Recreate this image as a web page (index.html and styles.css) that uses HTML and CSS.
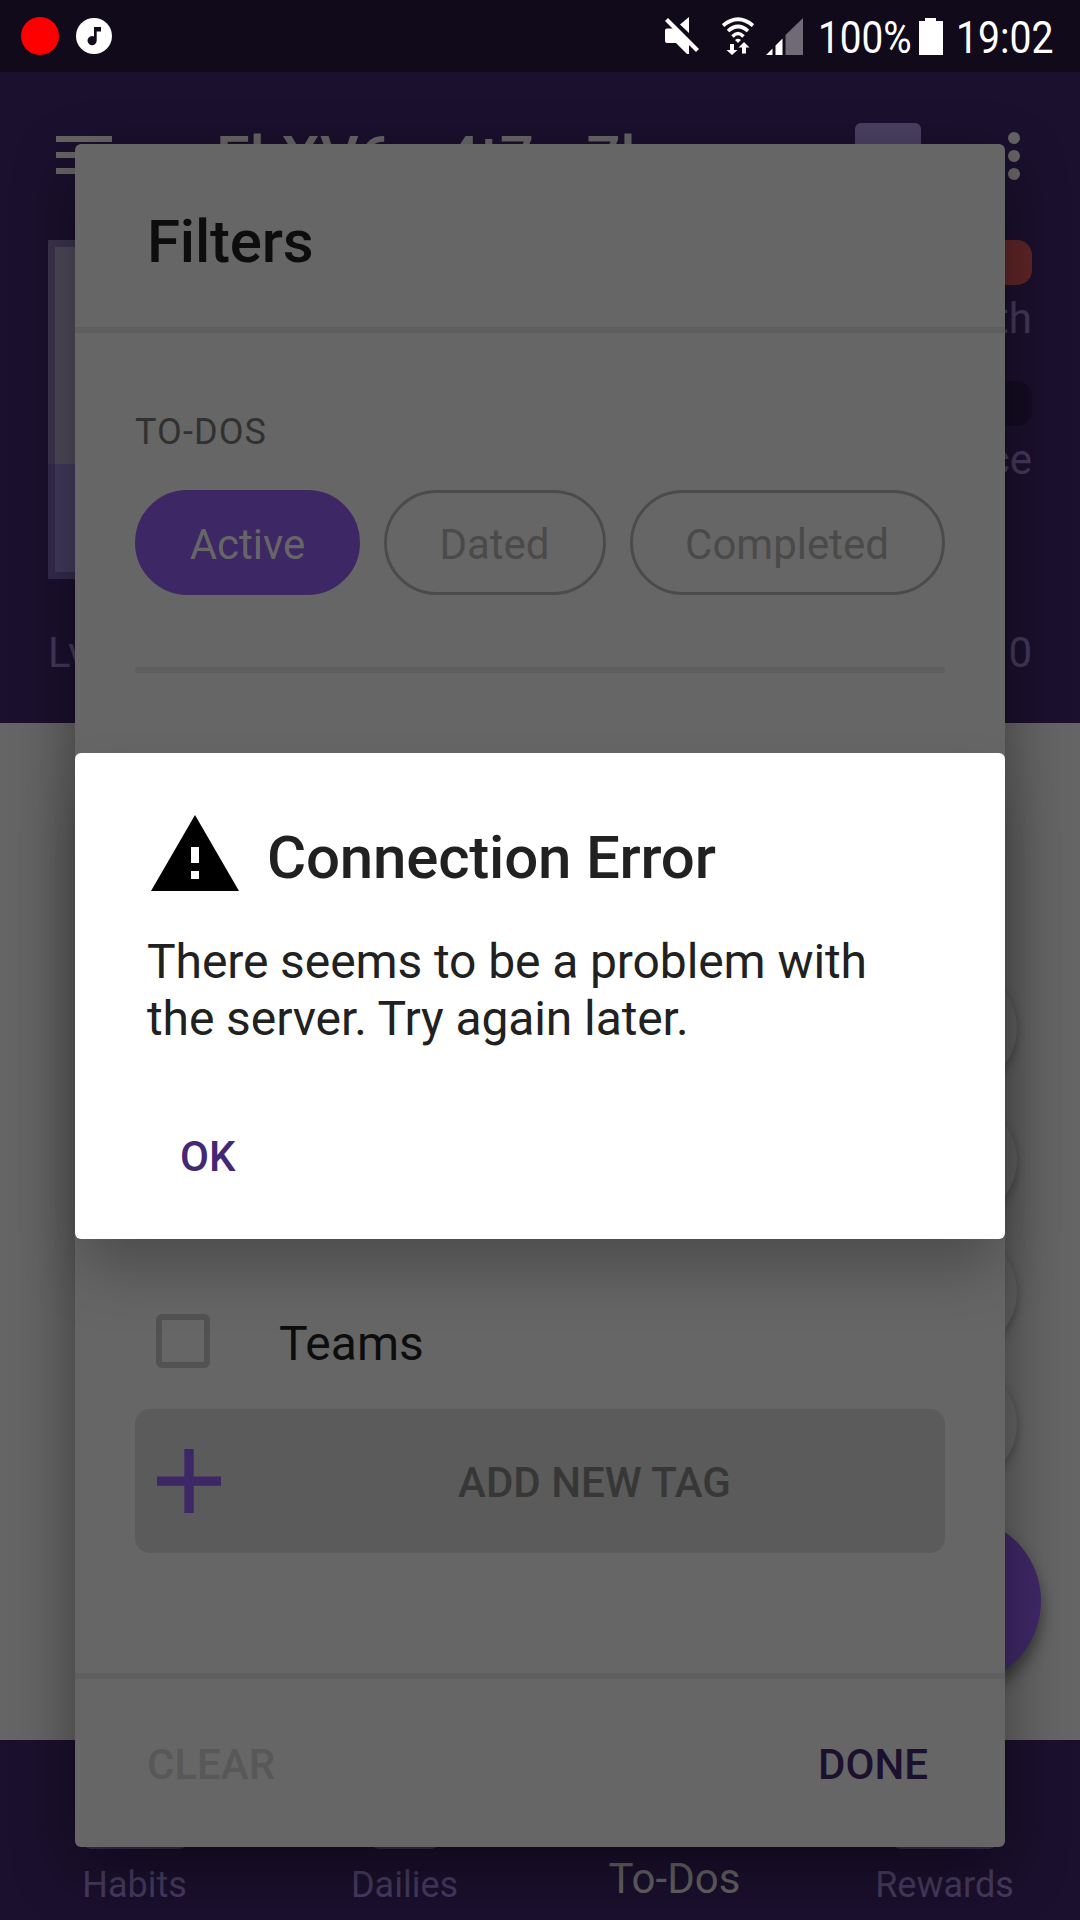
FILE: index.html
```
<!DOCTYPE html>
<html lang="en">
<head>
<meta charset="utf-8">
<title>Filters</title>
<link rel="stylesheet" href="styles.css">
</head>
<body>
<div class="screen">
  <div class="statusbar">
    <span class="rec"></span>
    <svg class="music" viewBox="0 0 36 36"><circle cx="18" cy="18" r="18" fill="#fff"/><path d="M18 9h7v4.500h-4.300v9a4.600 4.600 0 1 1-2.700-4.100z" fill="#120b1c"/></svg>
    <span class="spacer"></span>
    <svg class="mute" viewBox="0 0 34 38" fill="#fff"><path d="M24 0v16L15 7.500zM2 11.500h9L24 24v13h-2L11 26H2Q0 26 0 24V13.500q0-2 2-2z"/><path d="M1.500 2.500l31 31" stroke="#fff" stroke-width="4.200"/></svg>
    <svg class="wifi" viewBox="0 0 32 38" fill="none" stroke="#fff"><path d="M1 8.500Q16-4 31 8.500" stroke-width="3.700"/><path d="M6 14Q16 5 26 14" stroke-width="3.600"/><path d="M10.500 19.500Q16 13.500 21.500 19.500" stroke-width="3.400"/><path d="M13 23Q16 20.500 19 23L16 26z" fill="#fff" stroke="none"/><path d="M8 27h4v6h3.500L10 38l-5.500-5H8zM20 36.500h4v-6h3.500L22 25l-5.500 5.500H20z" fill="#fff" stroke="none"/></svg>
    <svg class="signal" viewBox="0 0 37 37"><path d="M0 37l6.500-6.500V37zM9.500 37V27.500l7-7V37z" fill="#fff"/><path d="M19.500 37V17L37 0v37z" fill="#6f6a76"/></svg>
    <span class="pct">100%</span>
    <svg class="battery" viewBox="0 0 24 37"><path d="M6 0h11v3h7v34H0V3h6z" fill="#fff"/></svg>
    <span class="clock">19:02</span>
  </div>

  <div class="header">
    <div class="toolbar">
      <span class="burger"><i></i><i></i><i></i></span>
      <span class="username">EkXV6m4t7m7k</span>
      <span class="tool-icon"></span>
      <span class="dots"><i></i><i></i><i></i></span>
    </div>
    <div class="profile">
      <div class="avatar"></div>
      <div class="stats">
        <div class="bar health"></div>
        <div class="label">Health</div>
        <div class="bar exp"></div>
        <div class="label">Experience</div>
      </div>
    </div>
    <div class="level"><span>Lvl 1</span><span>0</span></div>
  </div>

  <div class="tasks">
    <div class="fabs">
      <span class="mini"></span><span class="mini"></span><span class="mini"></span><span class="mini"></span>
      <span class="fab"></span>
    </div>
  </div>

  <div class="nav">
    <div class="tab"><span class="tab-icon wide"></span><span class="tab-label">Habits</span></div>
    <div class="tab"><span class="tab-icon"></span><span class="tab-label">Dailies</span></div>
    <div class="tab active"><span class="tab-label">To-Dos</span></div>
    <div class="tab"><span class="tab-icon wide"></span><span class="tab-label">Rewards</span></div>
  </div>

  <div class="dialog filters">
    <h1 class="filters-title">Filters</h1>
    <div class="filters-body">
      <div class="section">TO-DOS</div>
      <div class="chips">
        <span class="chip on">Active</span><span class="chip dated">Dated</span><span class="chip done-chip">Completed</span>
      </div>
      <div class="rule"></div>
      <div class="tags-head">EDIT</div>
      <div class="tag-row"><span class="check"></span><span class="tag-name">Teams</span></div>
      <div class="add"><svg class="plus" viewBox="0 0 64 64"><path d="M27.300 0h9.400v27.500H64v9.300H36.700V64h-9.400V36.800H0v-9.300h27.300z" fill="#3e2766"/></svg><span>ADD NEW TAG</span></div>
    </div>
    <div class="actions"><span class="clear">CLEAR</span><span class="done">DONE</span></div>
  </div>

  <div class="dialog error">
    <div class="error-head">
      <svg class="warn" viewBox="0 0 24 24"><path d="M1 21h22L12 2 1 21zm12-3h-2v-2h2v2zm0-4h-2v-4h2v4z"/></svg>
      <h2>Connection Error</h2>
    </div>
    <p>There seems to be a problem with<br>the server. Try again later.</p>
    <span class="ok">OK</span>
  </div>
</div>
</body>
</html>
```
FILE: styles.css
```
* { box-sizing: border-box; }
body { margin: 0; font-family: Roboto, "Noto Sans", sans-serif; }
h1, h2, p { margin: 0; }
.screen { position: relative; width: 1080px; height: 1920px; overflow: hidden; display: flex; flex-direction: column; background: #656565; }

.statusbar { height: 72px; flex: none; background: #110a1b; display: flex; align-items: center; padding: 0 25px 0 21px; color: #fff; font-size: 45px; position: relative; z-index: 1; }
.rec { width: 38px; height: 38px; border-radius: 50%; background: #f00; }
.music { width: 36px; height: 36px; margin-left: 17px; }
.spacer { flex: 1; }
.mute { width: 34px; height: 38px; margin-right: 23px; }
.wifi { width: 32px; height: 38px; margin-right: 12px; }
.signal { width: 37px; height: 37px; margin-right: 15px; }
.pct, .clock { white-space: nowrap; line-height: 72px; padding-top: 3px; transform-origin: 0 50%; transform: scaleX(.86); }
.pct { width: 93px; }
.battery { width: 24px; height: 37px; margin-right: 13px; margin-left: 8px; }
.clock { width: 99px; transform: scaleX(.87); }

.header { height: 651px; flex: none; background: #1b102e; display: flex; flex-direction: column; color: #43395c; font-size: 42px; }
.toolbar { height: 168px; display: flex; align-items: flex-start; padding: 51px 60px 0 56px; }
.burger { width: 56px; display: flex; flex-direction: column; gap: 10px; padding-top: 13px; }
.burger i { height: 6px; background: #656565; }
.username { width: 639px; margin-left: 104px; font-size: 60px; font-weight: 500; line-height: 70px; color: #656565; letter-spacing: .15px; }
.tool-icon { width: 66px; height: 66px; border-radius: 6px; background: #4a4062; }
.dots { display: flex; flex-direction: column; gap: 6px; padding-top: 9px; margin-left: 87px; }
.dots i { width: 12px; height: 12px; border-radius: 50%; background: #656565; }
.profile { display: flex; justify-content: space-between; padding: 0 48px; height: 380px; }
.avatar { width: 297px; height: 339px; border: 7px solid rgba(27,22,58,.4); background: linear-gradient(#4f4a5b 224px, #433b5d 224px) border-box; }
.stats { width: 620px; text-align: right; }
.bar { height: 45px; border-radius: 15px; }
.health { background: #5f2527; }
.exp { background: #140c22; }
.label { height: 96px; line-height: 49px; padding-top: 9px; }
.level { display: flex; justify-content: space-between; padding: 8px 48px 0; line-height: 49px; }

.tasks { height: 1017px; flex: none; display: flex; justify-content: flex-end; padding-right: 39px; background: #656565; }
.fabs { display: flex; flex-direction: column; align-items: center; gap: 12px; padding-top: 245px; }
.mini { width: 120px; height: 120px; border-radius: 50%; background: #656565; box-shadow: 0 4px 10px rgba(0,0,0,.28); }
.fab { width: 168px; height: 168px; border-radius: 50%; background: #402868; margin-top: 21px; box-shadow: 0 10px 16px rgba(0,0,0,.45); }

.nav { height: 180px; flex: none; background: #1b102e; display: flex; color: #463b5f; font-size: 36px; }
.tab { width: 270px; display: flex; flex-direction: column; align-items: center; justify-content: flex-end; padding: 0 1px 14px 0; }
.tab-icon { width: 70px; height: 60px; border-radius: 9px; background: #3a3052; margin-bottom: 15px; }
.tab-icon.wide { width: 106px; }
.tab-label { line-height: 42px; }
.active { font-size: 42px; color: #636363; padding-bottom: 20px; }

.dialog { position: absolute; left: 75px; width: 930px; border-radius: 6px; }
.filters { top: 144px; height: 1703px; background: #666; box-shadow: 0 22px 62px rgba(0,0,0,.42); display: flex; flex-direction: column; }
.filters-title { height: 189px; border-bottom: 6px solid #5f5f5f; padding: 63px 72px 0; font-size: 60px; line-height: 70px; font-weight: 500; color: #0d0d0d; letter-spacing: -.2px; }
.filters-body { height: 1340px; padding: 78px 60px 0; display: flex; flex-direction: column; }
.section { font-size: 36px; line-height: 42px; color: #313131; letter-spacing: 1.1px; }
.chips { display: flex; gap: 24px; margin-top: 37px; }
.chip { height: 105px; width: 222px; border: 3px solid #4b4b4b; border-radius: 53px; font-size: 42px; line-height: 104px; color: #4a4a4a; text-align: center; padding-right: 1px; }
.chip.on { width: 225px; background: #3d2765; border-color: #3d2765; color: #666; padding: 0; }
.chip.done-chip { width: 315px; }
.rule { height: 6px; background: #5f5f5f; margin-top: 72px; }
.tags-head { font-size: 48px; font-weight: 500; line-height: 56px; color: #4c4755; text-align: right; margin-top: 70px; letter-spacing: 1.3px; }
.tag-row { display: flex; align-items: center; gap: 69px; height: 132px; margin-top: 476px; padding-left: 21px; font-size: 48px; color: #0d0d0d; }
.tag-name { padding-top: 4px; }
.check { width: 54px; height: 54px; border: 6px solid #525252; border-radius: 6px; }
.add { height: 144px; flex: none; margin-top: 2px; border-radius: 15px; background: #5b5b5b; display: flex; align-items: center; padding: 0 0 0 22px; font-size: 42px; font-weight: 500; color: #373737; }
.plus { width: 64px; height: 64px; }
.add span { flex: 1; text-align: center; padding: 2px 0 0 23px; }
.actions { flex: 1; border-top: 6px solid #5f5f5f; display: flex; justify-content: space-between; padding: 61px 77px 0 72px; font-size: 42px; line-height: 49px; font-weight: 500; }
.clear { color: #585858; }
.done { color: #1b102e; }

.error { top: 753px; height: 486px; background: #fff; box-shadow: 0 36px 60px -10px rgba(0,0,0,.28); padding: 54px 72px 0; color: #212121; }
.error-head { display: flex; align-items: center; gap: 24px; }
.warn { width: 96px; height: 96px; }
.error h2 { font-size: 60px; line-height: 70px; font-weight: 500; padding-top: 6px; letter-spacing: -.2px; }
.error p { font-size: 48px; line-height: 57px; padding-top: 30px; letter-spacing: -.1px; }
.ok { display: block; margin: 85px 0 0 33px; font-size: 42px; line-height: 49px; font-weight: 500; color: #432874; }
```
